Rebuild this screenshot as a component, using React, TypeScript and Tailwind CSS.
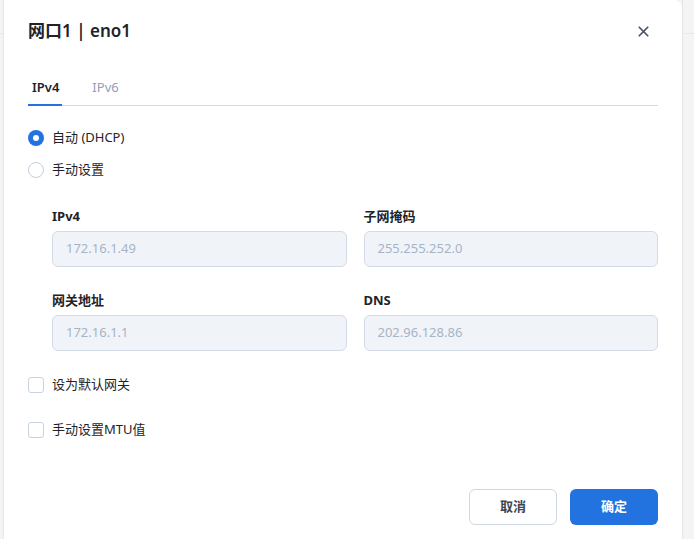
import { X } from 'lucide-react';

const font = { fontFamily: '"Noto Sans", "Noto Sans CJK SC", sans-serif' };

function Field({ label, value }: { label: string; value: string }) {
  return (
    <div className="flex flex-col">
      <div className="h-[20px] text-[13px] font-bold leading-[20px] text-[#1f2329]">{label}</div>
      <div className="mt-[5px] flex h-[36px] items-center rounded-[6px] border border-[#d3dbe6] bg-[#f0f3f8] px-[13px] text-[13px] text-[#a7b3c6]">
        {value}
      </div>
    </div>
  );
}

function Radio({ checked, label }: { checked?: boolean; label: string }) {
  return (
    <div className="flex h-[20px] items-center">
      {checked ? (
        <span className="flex h-[16px] w-[16px] items-center justify-center rounded-full bg-[#2272e0]">
          <span className="h-[6px] w-[6px] rounded-full bg-white" />
        </span>
      ) : (
        <span className="h-[16px] w-[16px] rounded-full border border-[#c4cedb] bg-white" />
      )}
      <span className="ml-[8px] text-[13px] text-[#1f2329]">{label}</span>
    </div>
  );
}

function Checkbox({ label }: { label: string }) {
  return (
    <div className="flex h-[20px] items-center">
      <span className="h-[16px] w-[16px] rounded-[3px] border border-[#c9d3e0] bg-white" />
      <span className="ml-[8px] text-[13px] text-[#1f2329]">{label}</span>
    </div>
  );
}

export default function App() {
  return (
    <div className="flex h-[539px] w-[694px] overflow-hidden bg-[#f4f4f4]" style={font}>
      {/* page behind the dialog */}
      <div className="w-[4px] shrink-0 border-r border-[#e6e6e6]">
        <div className="h-[34px] border-b border-[#e8e8e8]" />
      </div>

      <div className="flex w-[678px] shrink-0 flex-col rounded-tr-[8px] bg-white px-[24px]">
        {/* header */}
        <div className="flex h-[64px] items-center justify-between pb-[2px]">
          <h1 className="text-[17px] font-semibold text-[#1f2329]">网口1 | eno1</h1>
          <X className="mr-[6px] h-[17px] w-[17px] text-[#4b5565]" strokeWidth={2.4} />
        </div>

        {/* tabs */}
        <div className="mt-[13px] flex border-b border-[#d3dbe6]">
          <div className="flex flex-col">
            <div className="px-[4px] pb-[7px] text-[13px] font-semibold leading-[20px] text-[#1f2329]">IPv4</div>
            <div className="-mb-px h-[2px] w-[34px] bg-[#2272e0]" />
          </div>
          <div className="ml-[29px] pb-[7px] text-[13px] leading-[20px] text-[#8fa0b8]">IPv6</div>
        </div>

        {/* mode */}
        <div className="mt-[22px] flex flex-col gap-[12px]">
          <Radio checked label="自动 (DHCP)" />
          <Radio label="手动设置" />
        </div>

        {/* fields */}
        <div className="ml-[24px] mt-[26px] grid grid-cols-2 gap-x-[17px] gap-y-[23px]">
          <Field label="IPv4" value="172.16.1.49" />
          <Field label="子网掩码" value="255.255.252.0" />
          <Field label="网关地址" value="172.16.1.1" />
          <Field label="DNS" value="202.96.128.86" />
        </div>

        {/* options */}
        <div className="mt-[24px] flex flex-col gap-[25px]">
          <Checkbox label="设为默认网关" />
          <Checkbox label="手动设置MTU值" />
        </div>

        {/* footer */}
        <div className="mt-[49px] flex justify-end gap-[13px]">
          <button className="h-[36px] w-[88px] rounded-[6px] border border-[#cfd8e3] bg-white text-[13px] font-semibold text-[#3c4452]">
            取消
          </button>
          <button className="h-[36px] w-[88px] rounded-[6px] bg-[#2272e0] text-[13px] font-semibold text-white">
            确定
          </button>
        </div>
      </div>

      <div className="flex-1 border-l border-[#e6e6e6]">
        <div className="h-[34px] border-b border-[#e8e8e8]" />
      </div>
    </div>
  );
}
